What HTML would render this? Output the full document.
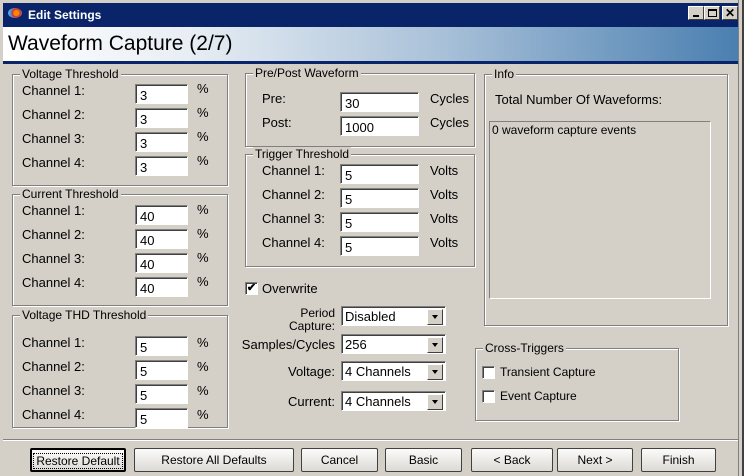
<!DOCTYPE html>
<html><head><style>
*{box-sizing:border-box}
body{margin:0;width:744px;height:476px;background:#d4d0c8;font-family:"Liberation Sans",sans-serif;font-size:12px;color:#000;position:relative;overflow:hidden}
.a{position:absolute}
.L{font-size:13px;line-height:24px}
.title{left:0;top:0;width:744px;height:27px;background:#0a246a;border-left:3px solid #d4d0c8;border-top:3px solid #d4d0c8}
.hdr{left:3px;top:27px;width:736px;height:34px;background:linear-gradient(90deg,#fff 0%,#e8eef4 25%,#a8c0d8 60%,#4a7fb0 100%)}
.strip{left:3px;top:61px;width:736px;height:3px;background:#0a246a}
.rb{left:738px;top:0;width:6px;height:476px;background:linear-gradient(90deg,#808080 0,#808080 1px,#d4d0c8 1px,#d4d0c8 4px,#404040 4px)}
.tb{top:6px;width:16px;height:14px;background:#d4d0c8;border:1px solid;border-color:#fff #404040 #404040 #fff}
.gb{border:1px solid #808080;box-shadow:1px 1px 0 #fff inset,1px 1px 0 #fff}
.gl{background:#d4d0c8;padding:0 2px;position:absolute;top:-8px;left:7px;white-space:nowrap;font-size:12px}
.in{background:#fff;border:1px solid;border-color:#808080 #fff #fff #808080;box-shadow:inset 1px 1px 0 #404040;width:53px;height:20px;padding:3px 0 0 4px;font-size:13px}
.sel{background:#fff;border:1px solid;border-color:#808080 #fff #fff #808080;box-shadow:inset 1px 1px 0 #404040;width:105px;height:20px;padding:2px 0 0 3px;font-size:13px}
.sel i{position:absolute;right:2px;top:2px;width:16px;height:16px;background:#d4d0c8;border:1px solid;border-color:#fff #404040 #404040 #fff}
.sel i:after{content:"";position:absolute;left:4px;top:5px;border:3.5px solid transparent;border-top:4px solid #000}
.btn{top:448px;height:24px;border:1px solid #404040;border-radius:2px;background:linear-gradient(#fbfbfa,#dcdad5);text-align:center;line-height:22px;font-size:12px}
.cb{width:13px;height:13px;background:#fff;border:1px solid;border-color:#808080 #fff #fff #808080;box-shadow:inset 1px 1px 0 #404040}
</style></head><body>
<div class="a title"></div>
<div class="a" style="left:8px;top:8px;width:14px;height:10px;border-radius:50%;background:radial-gradient(circle at 60% 50%,#f80 0 25%,#c33 40%,#4af 70%)"></div>
<div class="a" style="left:28px;top:8px;color:#fff;font-weight:bold;font-size:12px">Edit Settings</div>
<div class="a tb" style="left:688px"><div class="a" style="left:4px;top:8px;width:6px;height:2px;background:#000"></div></div>
<div class="a tb" style="left:704px"><div class="a" style="left:3px;top:2px;width:9px;height:8px;border:1px solid #000;border-top-width:2px"></div></div>
<div class="a tb" style="left:722px;font-weight:bold;font-size:12px;line-height:12px;text-align:center">✕</div>
<div class="a hdr"></div>
<div class="a" style="left:8px;top:32px;font-size:21px">Waveform Capture (2/7)</div>
<div class="a strip"></div>
<div class="a rb"></div>

<div class="a gb" style="left:12px;top:74px;width:216px;height:112px"><span class="gl">Voltage Threshold</span></div>
<div class="a gb" style="left:12px;top:194px;width:216px;height:112px"><span class="gl">Current Threshold</span></div>
<div class="a gb" style="left:12px;top:315px;width:216px;height:113px"><span class="gl">Voltage THD Threshold</span></div>

<div class="a L" style="left:22px;top:79px">Channel 1:<br>Channel 2:<br>Channel 3:<br>Channel 4:</div>
<div class="a in" style="left:135px;top:84px">3</div><div class="a in" style="left:135px;top:108px">3</div><div class="a in" style="left:135px;top:132px">3</div><div class="a in" style="left:135px;top:156px">3</div>
<div class="a L" style="left:197px;top:77px">%<br>%<br>%<br>%</div>

<div class="a L" style="left:22px;top:199px">Channel 1:<br>Channel 2:<br>Channel 3:<br>Channel 4:</div>
<div class="a in" style="left:135px;top:205px">40</div><div class="a in" style="left:135px;top:229px">40</div><div class="a in" style="left:135px;top:253px">40</div><div class="a in" style="left:135px;top:277px">40</div>
<div class="a L" style="left:197px;top:198px">%<br>%<br>%<br>%</div>

<div class="a L" style="left:22px;top:331px">Channel 1:<br>Channel 2:<br>Channel 3:<br>Channel 4:</div>
<div class="a in" style="left:135px;top:336px">5</div><div class="a in" style="left:135px;top:360px">5</div><div class="a in" style="left:135px;top:384px">5</div><div class="a in" style="left:135px;top:408px">5</div>
<div class="a L" style="left:197px;top:331px">%<br>%<br>%<br>%</div>

<div class="a gb" style="left:245px;top:73px;width:230px;height:74px"><span class="gl">Pre/Post Waveform</span></div>
<div class="a L" style="left:262px;top:87px">Pre:<br>Post:</div>
<div class="a in" style="left:340px;top:92px;width:79px">30</div><div class="a in" style="left:340px;top:116px;width:79px">1000</div>
<div class="a L" style="left:430px;top:87px">Cycles<br>Cycles</div>

<div class="a gb" style="left:245px;top:154px;width:230px;height:113px"><span class="gl">Trigger Threshold</span></div>
<div class="a L" style="left:262px;top:159px">Channel 1:<br>Channel 2:<br>Channel 3:<br>Channel 4:</div>
<div class="a in" style="left:340px;top:164px;width:79px">5</div><div class="a in" style="left:340px;top:188px;width:79px">5</div><div class="a in" style="left:340px;top:212px;width:79px">5</div><div class="a in" style="left:340px;top:236px;width:79px">5</div>
<div class="a L" style="left:430px;top:159px">Volts<br>Volts<br>Volts<br>Volts</div>

<div class="a cb" style="left:245px;top:282px;font-size:11px;line-height:10px;text-align:center;font-weight:bold">✔</div>
<div class="a" style="left:262px;top:281px;font-size:13px">Overwrite</div>

<div class="a" style="left:240px;top:307px;width:95px;text-align:right;font-size:12px;line-height:13px">Period<br>Capture:</div>
<div class="a" style="left:240px;top:337px;width:95px;text-align:right;font-size:13px">Samples/Cycles</div>
<div class="a" style="left:240px;top:364px;width:95px;text-align:right;font-size:13px">Voltage:</div>
<div class="a" style="left:240px;top:394px;width:95px;text-align:right;font-size:13px">Current:</div>
<div class="a sel" style="left:341px;top:306px">Disabled<i></i></div>
<div class="a sel" style="left:341px;top:334px">256<i></i></div>
<div class="a sel" style="left:341px;top:361px">4 Channels<i></i></div>
<div class="a sel" style="left:341px;top:391px">4 Channels<i></i></div>

<div class="a gb" style="left:484px;top:74px;width:244px;height:252px"><span class="gl">Info</span></div>
<div class="a" style="left:495px;top:92px;font-size:13px">Total Number Of Waveforms:</div>
<div class="a" style="left:489px;top:121px;width:222px;height:178px;border:1px solid;border-color:#808080 #fff #fff #808080;padding:1px 2px;font-size:12px">0 waveform capture events</div>

<div class="a gb" style="left:475px;top:348px;width:204px;height:73px"><span class="gl">Cross-Triggers</span></div>
<div class="a cb" style="left:482px;top:366px"></div><div class="a" style="left:500px;top:365px;font-size:12px">Transient Capture</div>
<div class="a cb" style="left:482px;top:390px"></div><div class="a" style="left:500px;top:389px;font-size:12px">Event Capture</div>

<div class="a" style="left:3px;top:439px;width:735px;height:2px;border-top:1px solid #808080;border-bottom:1px solid #fff"></div>

<div class="a btn" style="left:30px;width:96px;border:2px solid #000"><span style="outline:1px dotted #000;padding:0 2px">Restore Default</span></div>
<div class="a btn" style="left:134px;width:160px">Restore All Defaults</div>
<div class="a btn" style="left:301px;width:77px">Cancel</div>
<div class="a btn" style="left:385px;width:77px">Basic</div>
<div class="a btn" style="left:471px;width:82px">&lt; Back</div>
<div class="a btn" style="left:557px;width:76px">Next &gt;</div>
<div class="a btn" style="left:641px;width:75px">Finish</div>
</body></html>
